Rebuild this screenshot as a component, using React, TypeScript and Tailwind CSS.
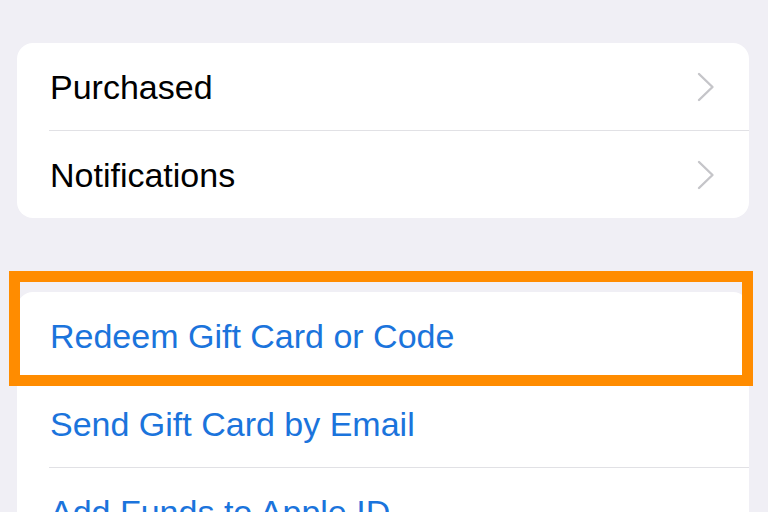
import type { ReactNode } from 'react';

type RowProps = {
  label: string;
  tone?: 'default' | 'link';
  chevron?: boolean;
};

const Chevron = () => (
  <svg width="18" height="30" viewBox="0 0 18 30" fill="none" className="shrink-0">
    <path d="M2 2 L15.5 15 L2 28" stroke="#c5c5c9" strokeWidth="2.4" strokeLinecap="round" strokeLinejoin="round" />
  </svg>
);

const Row = ({ label, tone = 'default', chevron = false }: RowProps) => (
  <div className="flex h-[87px] items-center justify-between pl-[33px] pr-[34px]">
    <span className={tone === 'link' ? 'text-[#1b74dc]' : 'text-black'}>{label}</span>
    {chevron && <Chevron />}
  </div>
);

const Divider = () => <div className="ml-[32px] h-px bg-[#e1e1e5]" />;

const Card = ({ children }: { children: ReactNode }) => (
  <div className="relative rounded-[16px] bg-white">{children}</div>
);

export default function App() {
  return (
    <div
      className="h-[512px] overflow-hidden bg-[#f0eff5] pl-[17px] pr-[19px] pt-[43px] text-[34px] leading-none"
      style={{ fontFamily: '"Liberation Sans", Arial, sans-serif' }}
    >
      <Card>
        <Row label="Purchased" chevron />
        <Divider />
        <Row label="Notifications" chevron />
      </Card>

      <div className="mt-[74px]">
        <Card>
          <Row label="Redeem Gift Card or Code" tone="link" />
          <Divider />
          <Row label="Send Gift Card by Email" tone="link" />
          <Divider />
          <Row label="Add Funds to Apple ID" tone="link" />

          {/* highlight frame drawn over the first row */}
          <div className="pointer-events-none absolute left-[-8px] top-[-21px] h-[115px] w-[744px] border-[11px] border-[#ff8c00]" />
        </Card>
      </div>
    </div>
  );
}
